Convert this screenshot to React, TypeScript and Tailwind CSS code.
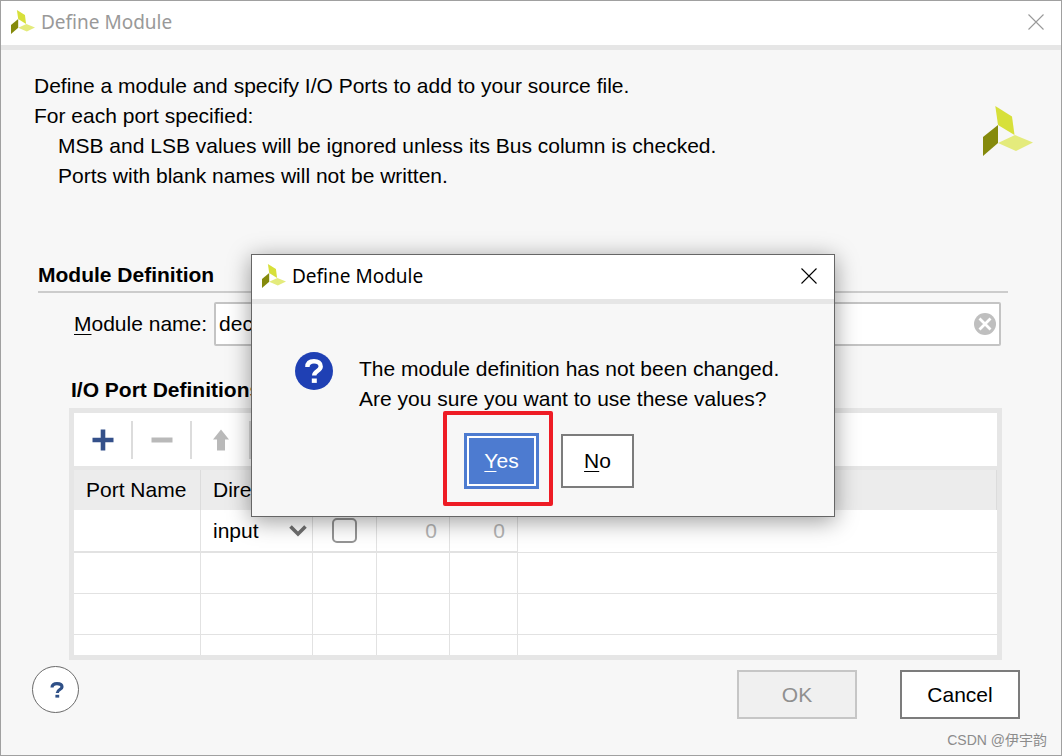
import React, { useState } from "react";

function BrandMark({ className }: { className: string }) {
  return (
    <svg viewBox="0 0 50 50" className={className} aria-hidden="true">
      <polygon points="12.3,0 29,10.5 31.5,29 15,19" fill="#d7e03a" />
      <polygon points="0,31 15,19 15,37 0,50" fill="#858a0c" />
      <polygon points="15,37 32,29 50,36.5 33,45" fill="#e4eb7c" />
    </svg>
  );
}

function CloseIcon() {
  return (
    <svg viewBox="0 0 16 16" className="size-4" aria-hidden="true">
      <path d="M0.5 0.5 15.5 15.5M15.5 0.5 0.5 15.5" stroke="currentColor" strokeWidth="1.1" fill="none" />
    </svg>
  );
}

function TitleBar({ tone, onClose }: { tone: string; onClose?: () => void }) {
  return (
    <header
      className={`flex h-[49px] items-center border-b-[5px] border-[#e6e6e6] bg-white pr-[17px] pb-0.5 pl-[10px] font-['Noto_Sans','Open_Sans',sans-serif] text-[19px] ${tone}`}
    >
      <BrandMark className="size-6" />
      <h2 className="ml-[6px] flex-1 leading-6">Define Module</h2>
      <button type="button" aria-label="Close" onClick={onClose}>
        <CloseIcon />
      </button>
    </header>
  );
}

function Mnemonic({ children }: { children: string }) {
  return <u className="decoration-1 underline-offset-3">{children}</u>;
}

function ToolButton({ label, children }: { label: string; children: React.ReactNode }) {
  return (
    <button
      type="button"
      aria-label={label}
      className="flex h-[38px] w-[59px] items-center justify-center border-r-2 border-[#dcdcdc]"
    >
      {children}
    </button>
  );
}

function PortTable() {
  const cell = "border-r border-b border-[#e2e2e2]";
  const last = "border-b border-[#e2e2e2]";
  return (
    <table className="w-full table-fixed border-separate border-spacing-0 text-left">
      <colgroup>
        <col className="w-[127px]" />
        <col className="w-[112px]" />
        <col className="w-[64px]" />
        <col className="w-[73px]" />
        <col className="w-[68px]" />
        <col />
      </colgroup>
      <thead className="bg-[#ececec]">
        <tr className="h-10">
          <th className="border-r border-[#dcdcdc] pl-3 font-normal">Port Name</th>
          <th className="border-r border-[#dcdcdc] pl-3 font-normal">Direction</th>
          <th className="border-r border-[#dcdcdc] pl-3 font-normal">Bus</th>
          <th className="border-r border-[#dcdcdc] pl-3 font-normal">MSB</th>
          <th className="border-r border-[#dcdcdc] pl-3 font-normal">LSB</th>
          <th className="border-r border-[#dcdcdc]" />
        </tr>
      </thead>
      <tbody>
        <tr className="h-[43px] text-[#b4b4b4]">
          <td className={`${cell} border-b-2`} />
          <td className={`${cell} border-b-2`}>
            <div className="relative flex items-center text-black">
              <select aria-label="Direction" className="w-full appearance-none bg-transparent pl-3 leading-6">
                <option>input</option>
                <option>output</option>
                <option>inout</option>
              </select>
              <svg viewBox="0 0 18 12" className="pointer-events-none absolute right-[5px] h-3 w-[18px]" aria-hidden="true">
                <path d="M1.5 1.5 9 9 16.5 1.5" stroke="#707070" strokeWidth="3.6" fill="none" />
              </svg>
            </div>
          </td>
          <td className={`${cell} border-b-2`}>
            <input
              type="checkbox"
              aria-label="Bus"
              className="mx-auto block size-[25px] appearance-none rounded-[5px] border-2 border-[#949494] bg-white"
            />
          </td>
          <td className={`${cell} border-b-2 pr-3 text-right`}>0</td>
          <td className={`${cell} border-b-2 pr-3 text-right`}>0</td>
          <td className={last} />
        </tr>
        {[0, 1, 2].map((row) => (
          <tr key={row} className="h-[41px]">
            <td className={cell} />
            <td className={cell} />
            <td className={cell} />
            <td className={cell} />
            <td className={cell} />
            <td className={last} />
          </tr>
        ))}
      </tbody>
    </table>
  );
}

function ConfirmDialog({ onClose }: { onClose: () => void }) {
  return (
    <section
      role="dialog"
      aria-label="Define Module"
      className="absolute top-[253px] left-[250px] w-[584px] border border-[#666] bg-[#f7f7f7] shadow-[0_4px_22px_rgba(0,0,0,0.4)]"
    >
      <TitleBar tone="text-black" onClose={onClose} />
      <div className="flex gap-[26px] px-[43px] pt-12">
        <svg viewBox="0 0 38 38" className="size-[38px] shrink-0" aria-hidden="true">
          <circle cx="19" cy="19" r="19" fill="#1f40b4" />
          <path d="M12.4 15C12.4 11 15 9.2 19 9.2s6.700 2 6.700 5.300c0 4.600-6.500 4.400-6.500 8.900" stroke="#fff" strokeWidth="4.400" fill="none" />
          <rect x="16.800" y="26.500" width="5" height="4.400" fill="#fff" />
        </svg>
        <p className="pt-0.5 leading-[30px]">
          The module definition has not been changed.
          <br />
          Are you sure you want to use these values?
        </p>
      </div>
      <div className="flex items-center justify-center gap-[22px] pt-[19px] pb-[27px] pl-3">
        <div className="relative">
          <button
            type="button"
            onClick={onClose}
            className="h-14 w-[75px] bg-[#4d7bd0] text-white outline-2 -outline-offset-[5px] outline-white"
          >
            <Mnemonic>Y</Mnemonic>es
          </button>
          <div className="pointer-events-none absolute -top-[22px] -right-[14px] -bottom-[17px] -left-[21px] rounded-xs border-4 border-[#ee1c25]" />
        </div>
        <button type="button" onClick={onClose} className="h-[54px] w-[73px] border-2 border-[#7c7c7c] bg-white">
          <Mnemonic>N</Mnemonic>o
        </button>
      </div>
    </section>
  );
}

export default function App() {
  const [confirming, setConfirming] = useState(true);
  const [name, setName] = useState("dec");
  return (
    <div className="relative flex min-h-screen flex-col border border-[#a0a0a0] bg-[#f7f7f7] font-['Liberation_Sans','Noto_Sans_CJK_SC',sans-serif] text-[21px] leading-[30px] text-black">
      <TitleBar tone="text-[#999]" />
      <main className="flex-1 pl-[33px]">
        <div className="flex items-start justify-between pt-[21px] pr-7">
          <p>
            Define a module and specify I/O Ports to add to your source file.
            <br />
            For each port specified:
            <br />
            <span className="pl-6">MSB and LSB values will be ignored unless its Bus column is checked.</span>
            <br />
            <span className="pl-6">Ports with blank names will not be written.</span>
          </p>
          <BrandMark className="mt-[35px] size-[50px] shrink-0" />
        </div>
        <h3 className="mt-[69px] mr-[53px] ml-1 border-b-2 border-[#cccccc] pb-px font-bold">Module Definition</h3>
        <div className="mt-[9px] mr-[60px] ml-10 flex items-center gap-[7px]">
          <label htmlFor="module-name" className="whitespace-nowrap">
            <Mnemonic>M</Mnemonic>odule name:
          </label>
          <div className="relative flex flex-1 items-center">
            <input
              id="module-name"
              value={name}
              onChange={(e) => setName(e.target.value)}
              className="h-11 w-full rounded-xs border-2 border-[#c4c4c4] bg-white pr-9 pl-[3px]"
            />
            <button type="button" aria-label="Clear" onClick={() => setName("")} className="absolute right-[5px]">
              <svg viewBox="0 0 22 22" className="block size-[22px]" aria-hidden="true">
                <circle cx="11" cy="11" r="11" fill="#bfbfbf" />
                <path d="M5.5 5.5 16.5 16.5M16.5 5.5 5.5 16.5" stroke="#fff" strokeWidth="2.8" />
              </svg>
            </button>
          </div>
        </div>
        <h3 className="mt-[29px] ml-[37px] font-bold">I/O Port Definitions</h3>
        <div className="mt-[3px] mr-[59px] ml-[35px] h-[252px] overflow-hidden border-[5px] border-[#e6e6e6] bg-white">
          <div className="flex h-[57px] items-center border-b-4 border-[#e6e6e6]">
            <ToolButton label="Add port">
              <svg viewBox="0 0 22 22" className="size-[22px]" aria-hidden="true">
                <path d="M0.5 11H21.5M11 0.5V21.5" stroke="#34508a" strokeWidth="4.6" />
              </svg>
            </ToolButton>
            <ToolButton label="Remove port">
              <svg viewBox="0 0 22 22" className="size-[22px]" aria-hidden="true">
                <path d="M0.5 11H21.5" stroke="#b9b9b9" strokeWidth="5" />
              </svg>
            </ToolButton>
            <ToolButton label="Move up">
              <svg viewBox="0 0 18 22" className="h-[22px] w-[18px]" aria-hidden="true">
                <path d="M9 0.5 17 10.5H13V21.5H5V10.5H1Z" fill="#b9b9b9" />
              </svg>
            </ToolButton>
          </div>
          <PortTable />
        </div>
      </main>
      <footer className="flex items-start justify-between pt-[6px] pr-[41px] pl-[31px]">
        <button
          type="button"
          aria-label="Help"
          className="flex size-[47px] items-center justify-center rounded-full border border-[#6a6a6a] bg-white"
        >
          <svg viewBox="0 0 14 16" className="ml-0.5 h-4 w-[14px]" aria-hidden="true">
            <path d="M2 5.500C2 2.800 4 1.700 7 1.700s5 1.200 5 3.200c0 2.700-4.700 2.600-4.700 6" stroke="#2f5087" strokeWidth="3.200" fill="none" />
            <rect x="5.400" y="12.800" width="3.800" height="2.800" fill="#2f5087" />
          </svg>
        </button>
        <div className="mt-1 flex gap-[43px]">
          <button type="button" disabled className="h-[49px] w-[120px] border-2 border-[#c6c6c6] bg-[#f0f0f0] text-[#8f8f8f]">
            OK
          </button>
          <button type="button" className="h-[49px] w-[120px] border-2 border-[#7c7c7c] bg-white">
            Cancel
          </button>
        </div>
      </footer>
      <small className="mt-[11px] mr-[14px] mb-[5px] self-end text-[14px] leading-5 text-[#8c8c8c]">CSDN @伊宇韵</small>
      {confirming && <ConfirmDialog onClose={() => setConfirming(false)} />}
    </div>
  );
}
